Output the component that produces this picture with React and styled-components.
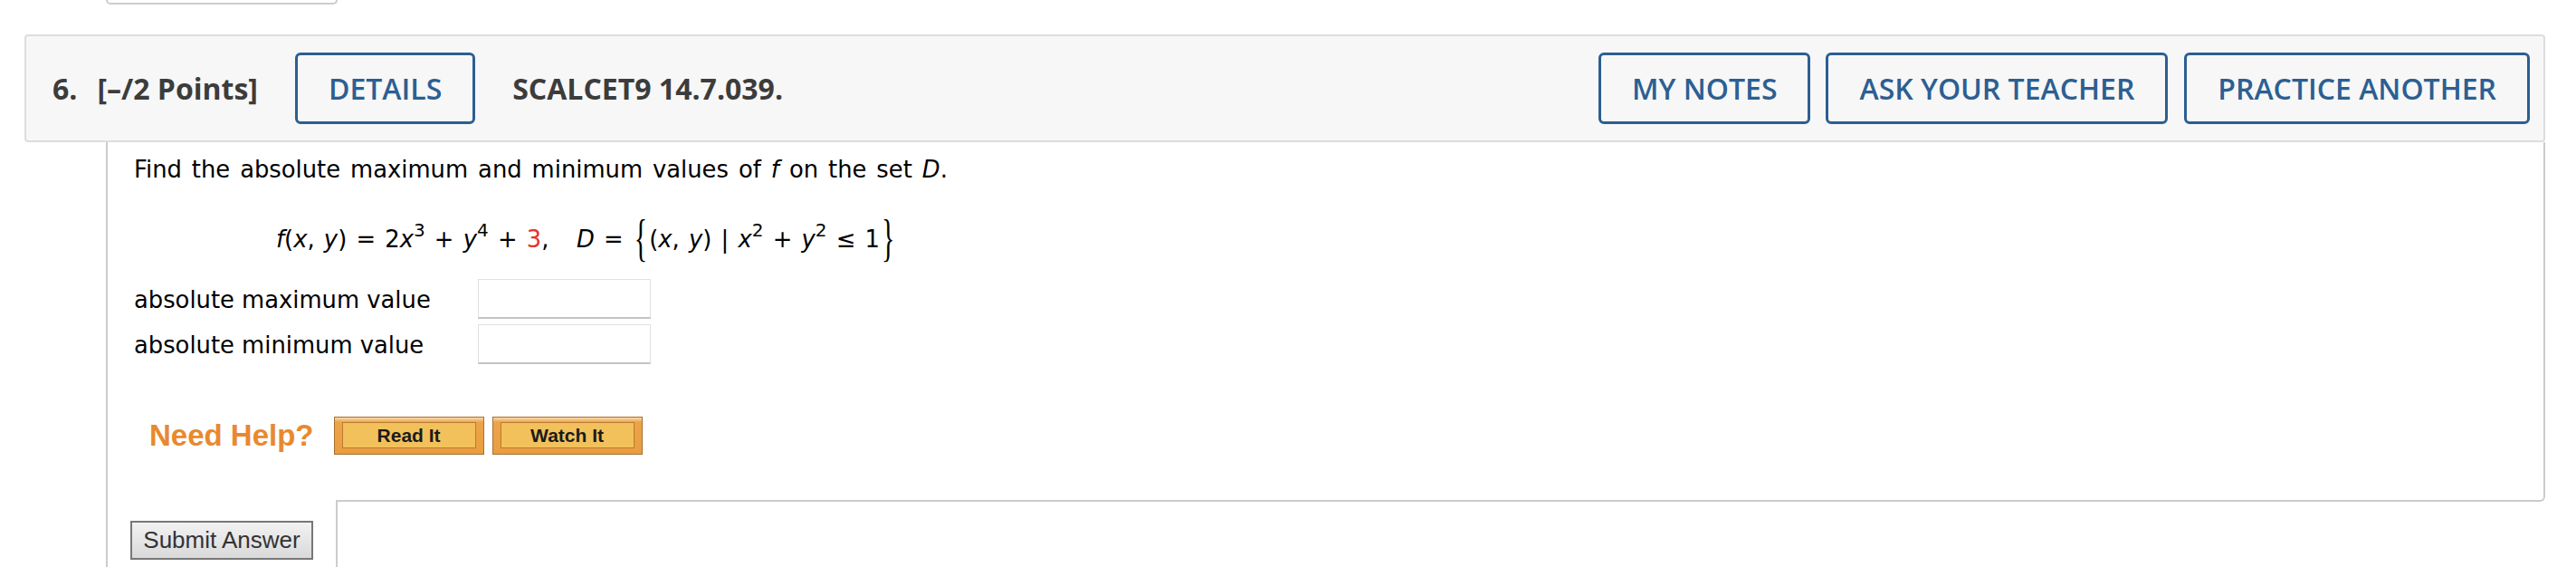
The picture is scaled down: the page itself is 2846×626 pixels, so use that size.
import React from "react";
import styled, { createGlobalStyle } from "styled-components";

const GlobalStyle = createGlobalStyle`
  html, body {
    margin: 0;
    padding: 0;
    background: #ffffff;
  }
  body {
    font-family: "DejaVu Sans", Verdana, sans-serif;
  }
`;

const Page = styled.div`
  padding: 0 34px 0 27px;
`;

const PrevTab = styled.div`
  margin-left: 90px;
  width: 252px;
  height: 3px;
  border: 2px solid #cccccc;
  border-top: 0;
  border-radius: 0 0 6px 6px;
`;

const Header = styled.div`
  margin-top: 33px;
  height: 119px;
  box-sizing: border-box;
  display: flex;
  align-items: center;
  padding: 0 15px 0 29px;
  background: #f7f7f7;
  border: 2px solid #dddddd;
  border-radius: 4px;
  font-family: "Open Sans", "DejaVu Sans", sans-serif;
  color: #3c3c3c;
`;

const Num = styled.span`
  font-size: 32px;
  font-weight: 700;
  margin-right: 22px;
`;

const Points = styled.span`
  font-size: 32px;
  font-weight: 700;
  margin-right: 41px;
`;

const Code = styled.span`
  font-size: 32px;
  font-weight: 700;
  margin-left: 41px;
`;

const Spacer = styled.div`
  flex: 1;
`;

const OutlineButton = styled.button`
  height: 79px;
  box-sizing: border-box;
  padding: 0 34px;
  margin-left: ${(p) => p.gap || 0}px;
  background: transparent;
  border: 3px solid #2c5f92;
  border-radius: 6px;
  font-family: "Open Sans", "DejaVu Sans", sans-serif;
  font-size: 32px;
  font-weight: 600;
  color: #2c5f92;
  white-space: nowrap;
`;

const Question = styled.div`
  margin-left: 90px;
`;

const Body = styled.div`
  border: 2px solid #cccccc;
  border-top: 0;
  border-radius: 0 0 6px 0;
  padding: 15px 29px 50px 29px;
  color: #000000;
  font-size: 25.8px;
  line-height: 30px;
`;

const Para = styled.div`
  word-spacing: 2.8px;
`;

const Formula = styled.div`
  margin-top: 46px;
  padding-left: 157px;
  white-space: pre;
  word-spacing: 2px;
`;

const Var = styled.i`
  font-style: italic;
`;

const Sup = styled.sup`
  font-size: 20px;
  line-height: 0;
  vertical-align: 12px;
`;

const Red = styled.span`
  color: #e8302a;
`;

const Brace = styled.span`
  display: inline-block;
  font-family: "Liberation Serif", serif;
  font-size: 30px;
  transform: scale(1, 1.9);
  margin: 0 2px;
`;

const Rows = styled.div`
  margin-top: 29px;
  display: flex;
  flex-direction: column;
  gap: 6px;
`;

const Row = styled.div`
  display: flex;
  align-items: center;
  height: 44px;
`;

const Label = styled.span`
  width: 380px;
  padding-top: 2px;
`;

const Input = styled.input`
  width: 191px;
  height: 44px;
  box-sizing: border-box;
  border: 1px solid #e0e0e0;
  border-bottom: 2px solid #c4c4c4;
  background: #ffffff;
`;

const HelpRow = styled.div`
  margin-top: 58px;
  padding-left: 17px;
  display: flex;
  align-items: center;
`;

const HelpText = styled.span`
  font-family: "Liberation Sans", Arial, sans-serif;
  font-size: 33px;
  font-weight: 700;
  color: #e8892e;
  margin-right: 22px;
`;

const HelpButton = styled.button`
  width: 166px;
  height: 42px;
  box-sizing: border-box;
  padding: 5px 8px 6px 8px;
  margin-right: 9px;
  border: 1px solid #a8702f;
  background: linear-gradient(#f9dcaa 0, #eca449 5px, #e99d3e 100%);
  display: flex;
`;

const HelpInner = styled.span`
  flex: 1;
  display: flex;
  align-items: center;
  justify-content: center;
  border: 1px solid #bb7a34;
  background: #f3c15c;
  font-family: "Liberation Sans", Arial, sans-serif;
  font-size: 21px;
  font-weight: 700;
  color: #1b1b1b;
`;

const Tab = styled.div`
  margin-top: -2px;
  width: 227px;
  height: 100px;
  background: #ffffff;
  border: 2px solid #cccccc;
  border-top: 0;
  padding: 23px 0 0 25px;
`;

const SubmitButton = styled.button`
  width: 202px;
  height: 43px;
  box-sizing: border-box;
  border: 2px solid #777777;
  background: linear-gradient(#f2f2f2, #d9d9d9);
  font-family: "Liberation Sans", Arial, sans-serif;
  font-size: 26px;
  color: #333333;
  padding: 0;
`;

export default function App() {
  return (
    <>
      <GlobalStyle />
      <Page>
        <PrevTab />
        <Header>
          <Num>6.</Num>
          <Points>[–/2 Points]</Points>
          <OutlineButton>DETAILS</OutlineButton>
          <Code>SCALCET9 14.7.039.</Code>
          <Spacer />
          <OutlineButton>MY NOTES</OutlineButton>
          <OutlineButton gap={17}>ASK YOUR TEACHER</OutlineButton>
          <OutlineButton gap={18}>PRACTICE ANOTHER</OutlineButton>
        </Header>
        <Question>
          <Body>
            <Para>
              Find the absolute maximum and minimum values of <Var>f</Var> on the set <Var>D</Var>.
            </Para>
            <Formula>
              <Var>f</Var>(<Var>x</Var>, <Var>y</Var>) = 2<Var>x</Var>
              <Sup>3</Sup> + <Var>y</Var>
              <Sup>4</Sup> + <Red>3</Red>,   <Var>D</Var> = <Brace>{"{"}</Brace>(<Var>x</Var>, <Var>y</Var>)
              {" | "}
              <Var>x</Var>
              <Sup>2</Sup> + <Var>y</Var>
              <Sup>2</Sup> ≤ 1<Brace>{"}"}</Brace>
            </Formula>
            <Rows>
              <Row>
                <Label>absolute maximum value</Label>
                <Input type="text" />
              </Row>
              <Row>
                <Label>absolute minimum value</Label>
                <Input type="text" />
              </Row>
            </Rows>
            <HelpRow>
              <HelpText>Need Help?</HelpText>
              <HelpButton>
                <HelpInner>Read It</HelpInner>
              </HelpButton>
              <HelpButton>
                <HelpInner>Watch It</HelpInner>
              </HelpButton>
            </HelpRow>
          </Body>
          <Tab>
            <SubmitButton>Submit Answer</SubmitButton>
          </Tab>
        </Question>
      </Page>
    </>
  );
}
